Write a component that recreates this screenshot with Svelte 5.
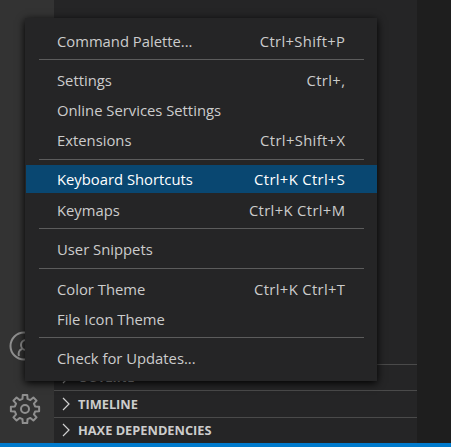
<script>
  const sections = [
    [["Command Palette...", "Ctrl+Shift+P"]],
    [["Settings", "Ctrl+,"], ["Online Services Settings", ""], ["Extensions", "Ctrl+Shift+X"]],
    [["Keyboard Shortcuts", "Ctrl+K Ctrl+S"], ["Keymaps", "Ctrl+K Ctrl+M"]],
    [["User Snippets", ""]],
    [["Color Theme", "Ctrl+K Ctrl+T"], ["File Icon Theme", ""]],
    [["Check for Updates...", ""]]
  ];
  const panels = ["OUTLINE", "TIMELINE", "HAXE DEPENDENCIES"];

  const pt = (r, deg) => {
    const a = (deg * Math.PI) / 180;
    return `${(16 + r * Math.sin(a)).toFixed(2)},${(16 - r * Math.cos(a)).toFixed(2)}`;
  };
  const gear = Array.from({ length: 8 }, (_, k) => k * 45)
    .flatMap((t) => [pt(10.4, t - 14), pt(14.3, t - 9), pt(14.3, t + 9), pt(10.4, t + 14)])
    .join(" ");
</script>

<div class="window">
  <div class="main">
    <aside class="activity">
      <svg class="account" width="30" height="30" viewBox="0 0 30 30" fill="none" stroke="#8f8f8f" stroke-width="2">
        <circle cx="15" cy="15" r="13.5"/>
        <circle cx="17" cy="14" r="5"/>
        <path d="M13 18C10 19 9 22 10 25"/>
      </svg>
      <svg class="gear" width="32" height="32" viewBox="0 0 32 32" fill="none" stroke="#8f8f8f" stroke-width="2" stroke-linejoin="round">
        <circle cx="16" cy="16" r="4"/>
        <polygon points={gear}/>
      </svg>
    </aside>
    <section class="sidebar">
      <div class="panels">
        {#each panels as p}
          <div class="panel">
            <svg width="8" height="14" viewBox="0 0 8 14" fill="none" stroke="#d0d0d0" stroke-width="1.2"><path d="M1 1l6 6-6 6"/></svg>
            <span>{p}</span>
          </div>
        {/each}
      </div>
    </section>
    <div class="editor"></div>
  </div>
  <div class="status"></div>

  <nav class="menu">
    {#each sections as sec, i}
      {#if i > 0}<div class="sep"></div>{/if}
      {#each sec as [label, key]}
        <div class="item" class:active={label === "Keyboard Shortcuts"}>
          <span>{label}</span><span class="key">{key}</span>
        </div>
      {/each}
    {/each}
  </nav>
</div>

<style>
  :global(body) { margin: 0; background: #1e1e1e; }
  .window {
    position: relative;
    width: 451px;
    height: 447px;
    display: flex;
    flex-direction: column;
    overflow: hidden;
    font-family: "Open Sans", "Noto Sans", sans-serif;
  }
  .main { flex: 1; display: flex; min-height: 0; }
  .activity {
    width: 54px;
    background: #333333;
    display: flex;
    flex-direction: column;
    justify-content: flex-end;
    align-items: center;
    gap: 32px;
    padding-bottom: 18px;
    box-sizing: border-box;
  }
  .account { margin-left: -6px; }
  .gear { margin-left: -4px; }
  .sidebar {
    width: 363px;
    background: #252526;
    display: flex;
    flex-direction: column;
    justify-content: flex-end;
  }
  .panels { display: flex; flex-direction: column; }
  .panel {
    height: 26.5px;
    box-sizing: border-box;
    border-top: 1px solid #4a4a4a;
    display: flex;
    align-items: center;
    gap: 8px;
    padding-left: 8px;
    color: #cccccc;
    font-size: 12.8px;
    font-weight: 700;
  }
  .editor { flex: 1; background: #1e1e1e; }
  .status { height: 4px; background: #007acc; }
  .menu {
    position: absolute;
    left: 25px;
    top: 18px;
    width: 352px;
    height: 363px;
    box-sizing: border-box;
    padding-top: 7.5px;
    background: #252526;
    box-shadow: 0 2px 8px #000000;
    color: #cccccc;
    font-size: 14.8px;
  }
  .item {
    height: 30px;
    box-sizing: border-box;
    margin-left: 1px;
    padding: 0 32px 0 31px;
    display: flex;
    align-items: center;
    justify-content: space-between;
    white-space: nowrap;
  }
  .key { letter-spacing: 0.35px; margin-right: -0.35px; }
  .item.active {
    background: #094771;
    background-clip: padding-box;
    border-bottom: 2px solid transparent;
    padding-top: 1px;
    color: #ffffff;
  }
  .sep {
    height: 1px;
    background: #5c5c5c;
    margin: 3.75px 13px 4.75px 14px;
  }
</style>
